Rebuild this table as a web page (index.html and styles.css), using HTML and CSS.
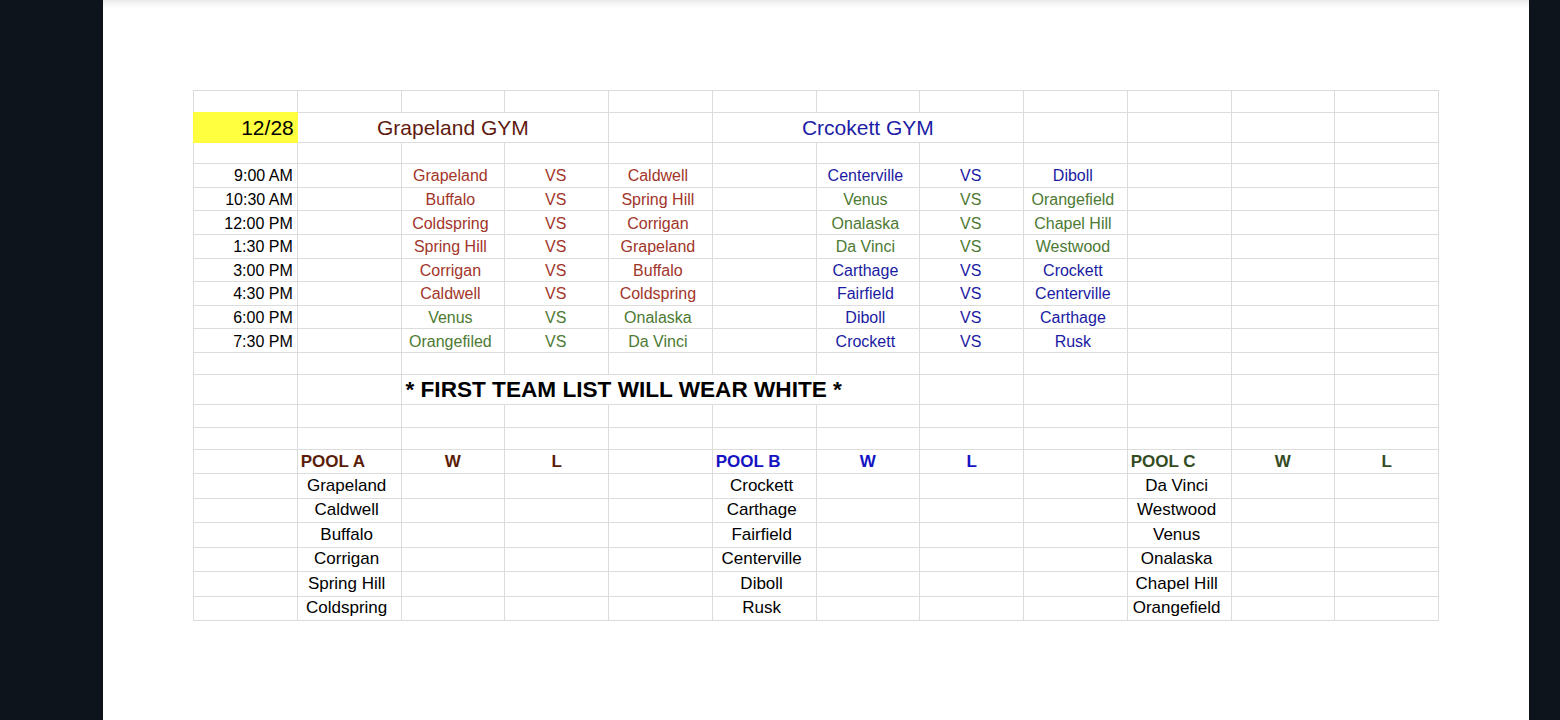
FILE: index.html
```html
<!DOCTYPE html>
<html lang="en">
<head>
<meta charset="utf-8">
<title>12/28 Schedule</title>
<link rel="stylesheet" href="styles.css">
</head>
<body>
<div class="frame">
  <div class="page">
    <div class="sheet">
      <!-- row 1 -->
      <div class="c"></div><div class="c"></div><div class="c"></div><div class="c"></div><div class="c"></div><div class="c"></div><div class="c"></div><div class="c"></div><div class="c"></div><div class="c"></div><div class="c"></div><div class="c"></div>
      <!-- row 2 -->
      <div class="c date">12/28</div>
      <div class="c span3 title maroon">Grapeland GYM</div>
      <div class="c"></div>
      <div class="c span3 title navy">Crcokett GYM</div>
      <div class="c"></div><div class="c"></div><div class="c"></div><div class="c"></div>
      <!-- row 3 -->
      <div class="c"></div><div class="c"></div><div class="c"></div><div class="c"></div><div class="c"></div><div class="c"></div><div class="c"></div><div class="c"></div><div class="c"></div><div class="c"></div><div class="c"></div><div class="c"></div>

      <!-- schedule -->
      <div class="c time">9:00 AM</div><div class="c"></div>
      <div class="c game red">Grapeland</div><div class="c game vs red">VS</div><div class="c game red">Caldwell</div><div class="c"></div>
      <div class="c game blue">Centerville</div><div class="c game vs blue">VS</div><div class="c game blue">Diboll</div>
      <div class="c"></div><div class="c"></div><div class="c"></div>

      <div class="c time">10:30 AM</div><div class="c"></div>
      <div class="c game red">Buffalo</div><div class="c game vs red">VS</div><div class="c game red">Spring Hill</div><div class="c"></div>
      <div class="c game green">Venus</div><div class="c game vs green">VS</div><div class="c game green">Orangefield</div>
      <div class="c"></div><div class="c"></div><div class="c"></div>

      <div class="c time">12:00 PM</div><div class="c"></div>
      <div class="c game red">Coldspring</div><div class="c game vs red">VS</div><div class="c game red">Corrigan</div><div class="c"></div>
      <div class="c game green">Onalaska</div><div class="c game vs green">VS</div><div class="c game green">Chapel Hill</div>
      <div class="c"></div><div class="c"></div><div class="c"></div>

      <div class="c time">1:30 PM</div><div class="c"></div>
      <div class="c game red">Spring Hill</div><div class="c game vs red">VS</div><div class="c game red">Grapeland</div><div class="c"></div>
      <div class="c game green">Da Vinci</div><div class="c game vs green">VS</div><div class="c game green">Westwood</div>
      <div class="c"></div><div class="c"></div><div class="c"></div>

      <div class="c time">3:00 PM</div><div class="c"></div>
      <div class="c game red">Corrigan</div><div class="c game vs red">VS</div><div class="c game red">Buffalo</div><div class="c"></div>
      <div class="c game blue">Carthage</div><div class="c game vs blue">VS</div><div class="c game blue">Crockett</div>
      <div class="c"></div><div class="c"></div><div class="c"></div>

      <div class="c time">4:30 PM</div><div class="c"></div>
      <div class="c game red">Caldwell</div><div class="c game vs red">VS</div><div class="c game red">Coldspring</div><div class="c"></div>
      <div class="c game blue">Fairfield</div><div class="c game vs blue">VS</div><div class="c game blue">Centerville</div>
      <div class="c"></div><div class="c"></div><div class="c"></div>

      <div class="c time">6:00 PM</div><div class="c"></div>
      <div class="c game green">Venus</div><div class="c game vs green">VS</div><div class="c game green">Onalaska</div><div class="c"></div>
      <div class="c game blue">Diboll</div><div class="c game vs blue">VS</div><div class="c game blue">Carthage</div>
      <div class="c"></div><div class="c"></div><div class="c"></div>

      <div class="c time">7:30 PM</div><div class="c"></div>
      <div class="c game green">Orangefiled</div><div class="c game vs green">VS</div><div class="c game green">Da Vinci</div><div class="c"></div>
      <div class="c game blue">Crockett</div><div class="c game vs blue">VS</div><div class="c game blue">Rusk</div>
      <div class="c"></div><div class="c"></div><div class="c"></div>

      <!-- row 12 -->
      <div class="c"></div><div class="c"></div><div class="c"></div><div class="c"></div><div class="c"></div><div class="c"></div><div class="c"></div><div class="c"></div><div class="c"></div><div class="c"></div><div class="c"></div><div class="c"></div>
      <!-- row 13 -->
      <div class="c"></div><div class="c"></div>
      <div class="c span5 note">* FIRST TEAM LIST WILL WEAR WHITE *</div>
      <div class="c"></div><div class="c"></div><div class="c"></div><div class="c"></div><div class="c"></div>
      <!-- row 14, 15 -->
      <div class="c"></div><div class="c"></div><div class="c"></div><div class="c"></div><div class="c"></div><div class="c"></div><div class="c"></div><div class="c"></div><div class="c"></div><div class="c"></div><div class="c"></div><div class="c"></div>
      <div class="c"></div><div class="c"></div><div class="c"></div><div class="c"></div><div class="c"></div><div class="c"></div><div class="c"></div><div class="c"></div><div class="c"></div><div class="c"></div><div class="c"></div><div class="c"></div>

      <!-- pool header -->
      <div class="c"></div>
      <div class="c pool pa left">POOL A</div><div class="c pool pa">W</div><div class="c pool pa">L</div>
      <div class="c"></div>
      <div class="c pool pb left">POOL B</div><div class="c pool pb">W</div><div class="c pool pb">L</div>
      <div class="c"></div>
      <div class="c pool pc left">POOL C</div><div class="c pool pc">W</div><div class="c pool pc">L</div>

      <!-- pool lists -->
      <div class="c"></div><div class="c team">Grapeland</div><div class="c"></div><div class="c"></div><div class="c"></div>
      <div class="c team">Crockett</div><div class="c"></div><div class="c"></div><div class="c"></div>
      <div class="c team">Da Vinci</div><div class="c"></div><div class="c"></div>

      <div class="c"></div><div class="c team">Caldwell</div><div class="c"></div><div class="c"></div><div class="c"></div>
      <div class="c team">Carthage</div><div class="c"></div><div class="c"></div><div class="c"></div>
      <div class="c team">Westwood</div><div class="c"></div><div class="c"></div>

      <div class="c"></div><div class="c team">Buffalo</div><div class="c"></div><div class="c"></div><div class="c"></div>
      <div class="c team">Fairfield</div><div class="c"></div><div class="c"></div><div class="c"></div>
      <div class="c team">Venus</div><div class="c"></div><div class="c"></div>

      <div class="c"></div><div class="c team">Corrigan</div><div class="c"></div><div class="c"></div><div class="c"></div>
      <div class="c team">Centerville</div><div class="c"></div><div class="c"></div><div class="c"></div>
      <div class="c team">Onalaska</div><div class="c"></div><div class="c"></div>

      <div class="c"></div><div class="c team">Spring Hill</div><div class="c"></div><div class="c"></div><div class="c"></div>
      <div class="c team">Diboll</div><div class="c"></div><div class="c"></div><div class="c"></div>
      <div class="c team">Chapel Hill</div><div class="c"></div><div class="c"></div>

      <div class="c"></div><div class="c team">Coldspring</div><div class="c"></div><div class="c"></div><div class="c"></div>
      <div class="c team">Rusk</div><div class="c"></div><div class="c"></div><div class="c"></div>
      <div class="c team">Orangefield</div><div class="c"></div><div class="c"></div>
    </div>
  </div>
</div>
</body>
</html>
```

FILE: styles.css
```css
* { box-sizing: border-box; }

html, body {
  margin: 0;
  padding: 0;
  height: 100%;
}

body {
  background: #0d141b;
  font-family: "Liberation Sans", Arial, sans-serif;
  color: #000;
  overflow: hidden;
}

.frame {
  height: 720px;
  padding-left: 103px;
}

.page {
  width: 1426px;
  height: 720px;
  background: #fff;
  background-image: linear-gradient(to bottom, #e9e9e9 0px, #f7f7f7 4px, #ffffff 9px);
  padding-top: 90px;
  padding-left: 90px;
}

.sheet {
  width: 1246px;
  display: grid;
  grid-template-columns: repeat(12, 1fr);
  grid-template-rows:
    22px 30px 21px
    repeat(8, 23.625px)
    22px 30px 23px 22px 24px
    repeat(6, 24.5px);
  border-top: 1px solid #dcdcdc;
  border-left: 1px solid #dcdcdc;
}

.c {
  border-right: 1px solid #dcdcdc;
  border-bottom: 1px solid #dcdcdc;
  display: flex;
  align-items: center;
  justify-content: center;
  white-space: nowrap;
  overflow: visible;
  padding: 0 4px;
  font-size: 16px;
}

.span3 { grid-column: span 3; }
.span5 { grid-column: span 5; }

.date {
  background: #ffff40;
  justify-content: flex-end;
  font-size: 21px;
  margin: -1px 0 0 -1px;
  border: none;
  padding-top: 1px;
}

.title { font-size: 21px; padding-top: 0; }
.maroon { color: #5f1a10; }
.navy { color: #1c1ca6; }

.time { justify-content: flex-end; padding-top: 2px; }

.game { padding: 2px 6px 0 1px; }
.vs { padding: 2px 5px 0 3px; }

.red { color: #a2352a; }
.green { color: #4d7a33; }
.blue { color: #1b1ba2; }

.note {
  justify-content: flex-start;
  font-weight: bold;
  font-size: 22.6px;
  padding-left: 4px;
}

.pool { font-weight: bold; font-size: 17px; }
.left { justify-content: flex-start; padding-left: 3px; }
.pa { color: #5a1d08; }
.pb { color: #1414c2; }
.pc { color: #344c1f; }

.team { font-size: 17px; padding: 0 6px 0 1px; }
```
